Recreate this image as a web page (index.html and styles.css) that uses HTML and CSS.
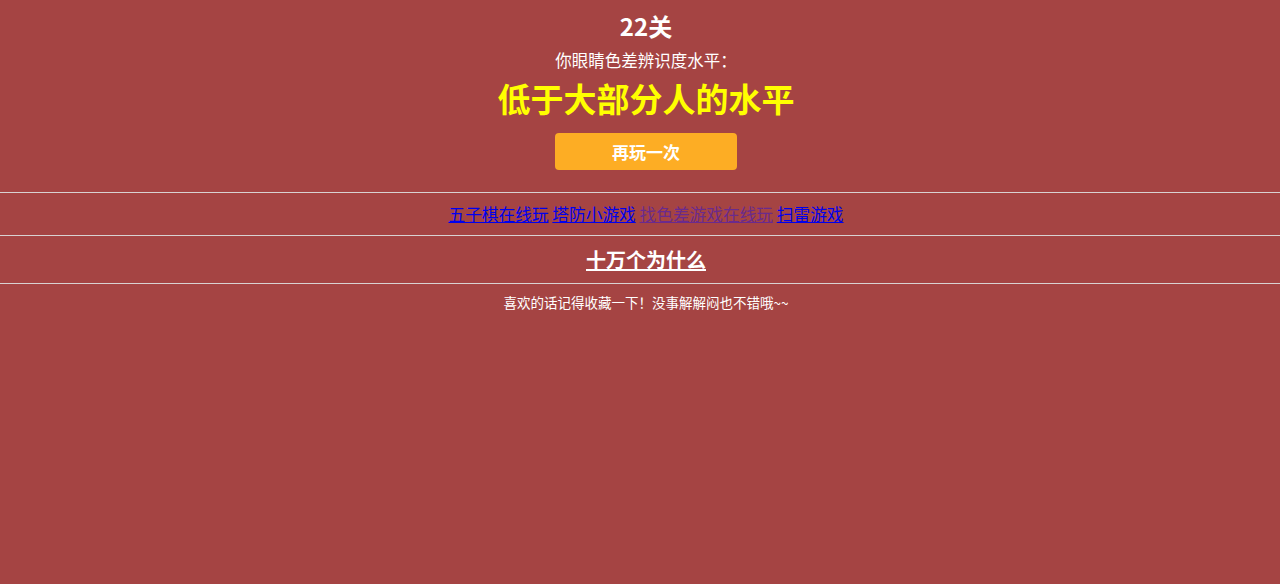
FILE: index.html
```html
<!DOCTYPE html>
<html lang="zh">
<head>
<meta charset="utf-8">
<title>找色差</title>
<link rel="stylesheet" href="styles.css">
</head>
<body>
<div class="result">
  <div class="level">22关</div>
  <div class="sub">你眼睛色差辨识度水平：</div>
  <div class="grade">低于大部分人的水平</div>
  <a class="again" href="#">再玩一次</a>
</div>
<div class="links">
  <a href="#">五子棋在线玩</a>
  <a href="#">塔防小游戏</a>
  <a class="visited" href="#">找色差游戏在线玩</a>
  <a href="#">扫雷游戏</a>
</div>
<div class="why"><a href="#">十万个为什么</a></div>
<div class="foot">喜欢的话记得收藏一下！没事解解闷也不错哦~~</div>
</body>
</html>
```
FILE: styles.css
```css
html, body {
  margin: 0;
  padding: 0;
  background: #a54443;
  height: 100%;
}
body {
  font-family: "Noto Sans CJK SC", "Noto Sans", sans-serif;
  color: #fff;
  text-align: center;
}
.result, .links, .why, .foot {
  padding-left: 12px;
}
.result {
  display: flex;
  flex-direction: column;
  align-items: center;
  padding-top: 11px;
  padding-bottom: 22px;
  border-bottom: 1px solid #d9d2d2;
}
.level {
  font-size: 24px;
  font-weight: bold;
  line-height: 30px;
}
.sub {
  margin-top: 7px;
  font-size: 16.5px;
  line-height: 24px;
}
.grade {
  margin-top: 4px;
  font-size: 33px;
  font-weight: bold;
  line-height: 44px;
  color: #ffff00;
}
.again {
  margin-top: 13px;
  width: 182px;
  height: 37px;
  line-height: 37px;
  background: #fdad24;
  border-radius: 4px;
  color: #fff;
  font-size: 17px;
  font-weight: bold;
  text-decoration: none;
}
.links {
  line-height: 42px;
  font-size: 16.7px;
  border-bottom: 1px solid #d9d2d2;
}
.links a {
  color: #0000ee;
}
.links a.visited {
  color: #6a2a8e;
}
.why {
  line-height: 47px;
  font-size: 20px;
  font-weight: bold;
  border-bottom: 1px solid #d9d2d2;
}
.why a {
  color: #fff;
}
.foot {
  margin-top: 8px;
  font-size: 13.5px;
  line-height: 20px;
}
```
